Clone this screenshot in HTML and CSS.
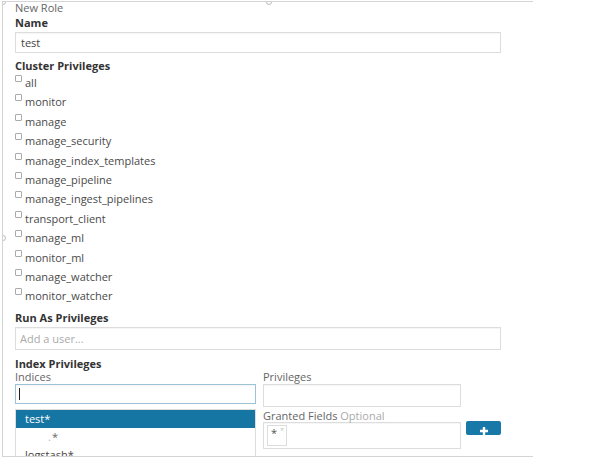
FILE: index.html
```html
<!DOCTYPE html>
<html>
<head>
<meta charset="utf-8">
<link rel="stylesheet" href="styles.css">
</head>
<body>
<div class="frame">
  <span class="handle h-tl"></span>
  <span class="handle h-tm"></span>
  <span class="handle h-ml"></span>
  <div class="title">New Role</div>
  <div class="heading name-h">Name</div>
  <div class="input name-input">test</div>
  <div class="heading sec">Cluster Privileges</div>
  <div class="checks">
    <div class="check"><span class="box"></span><span class="lbl">all</span></div>
    <div class="check"><span class="box"></span><span class="lbl">monitor</span></div>
    <div class="check"><span class="box"></span><span class="lbl">manage</span></div>
    <div class="check"><span class="box"></span><span class="lbl">manage_security</span></div>
    <div class="check"><span class="box"></span><span class="lbl">manage_index_templates</span></div>
    <div class="check"><span class="box"></span><span class="lbl">manage_pipeline</span></div>
    <div class="check"><span class="box"></span><span class="lbl">manage_ingest_pipelines</span></div>
    <div class="check"><span class="box"></span><span class="lbl">transport_client</span></div>
    <div class="check"><span class="box"></span><span class="lbl">manage_ml</span></div>
    <div class="check"><span class="box"></span><span class="lbl">monitor_ml</span></div>
    <div class="check"><span class="box"></span><span class="lbl">manage_watcher</span></div>
    <div class="check"><span class="box"></span><span class="lbl">monitor_watcher</span></div>
  </div>
  <div class="heading sec2">Run As Privileges</div>
  <div class="input runas"><span class="placeholder">Add a user...</span></div>
  <div class="heading sec3">Index Privileges</div>
  <div class="index-row">
    <div class="col-left">
      <div class="label">Indices</div>
      <div class="input focus"><span class="caret"></span></div>
      <div class="dropdown">
        <div class="opt active">test*</div>
        <div class="opt faint"><span class="dot">.</span>*</div>
        <div class="opt">logstash*</div>
      </div>
    </div>
    <div class="col-right">
      <div class="label">Privileges</div>
      <div class="input priv"></div>
      <div class="label gf">Granted Fields <span class="opt-lbl">Optional</span></div>
      <div class="input fields"><span class="tag">*<span class="x">×</span></span></div>
    </div>
    <div class="col-btn">
      <div class="add-btn">
        <svg width="10" height="10" viewBox="0 0 10 10"><path d="M5 1v8M1 5h8" stroke="#fff" stroke-width="2.4"/></svg>
      </div>
    </div>
  </div>
</div>
</body>
</html>
```

FILE: styles.css
```css
html, body {
  margin: 0;
  padding: 0;
  background: #fff;
}
body {
  font-family: "Open Sans", "Noto Sans", sans-serif;
  font-size: 11px;
  color: #444;
}
.frame {
  position: relative;
  margin: 1px 0 0 2px;
  width: 531px;
  height: 456px;
  border-top: 1px solid #d4d4d4;
  border-left: 1px solid #d4d4d4;
  border-bottom: 1px solid #d4d4d4;
  padding-left: 12px;
  box-sizing: border-box;
  overflow: hidden;
}
.handle {
  position: absolute;
  width: 4px;
  height: 4px;
  border: 1px solid #bbb;
  border-radius: 50%;
  background: #fff;
}
.h-tl { left: -3px; top: -3px; }
.h-tm { left: 263px; top: -3px; }
.h-ml { left: -3px; top: 233px; }
.title {
  font-size: 11px;
  line-height: 12px;
  color: #666;
}
.heading {
  font-weight: bold;
  color: #333;
  line-height: 16px;
  font-size: 11px;
}
.name-h { margin-top: 1px; }
.input {
  width: 486px;
  box-sizing: border-box;
  border: 1px solid #ddd;
  background: #fff;
  box-shadow: inset 0 1px 1px rgba(0,0,0,0.04);
}
.name-input {
  height: 21px;
  line-height: 19px;
  padding-left: 5px;
  color: #444;
  margin-top: 1px;
}
.sec { margin-top: 5px; }
.checks { display: flex; flex-direction: column; }
.check {
  display: flex;
  height: 19.4px;
  align-items: flex-start;
}
.box {
  width: 5px;
  height: 5px;
  border: 1px solid #aaa;
  border-radius: 1px;
  margin-top: 1px;
  flex: none;
}
.lbl {
  margin-left: 3px;
  margin-top: 2px;
  line-height: 14px;
  color: #4a4a4a;
}
.sec2 { margin-top: 3px; }
.runas {
  height: 23px;
  line-height: 21px;
  padding-left: 4px;
  margin-top: 1px;
}
.placeholder { color: #aaa; }
.sec3 { margin-top: 7px; line-height: 13px; }
.index-row {
  display: flex;
  align-items: flex-start;
}
.label {
  line-height: 13px;
  color: #666;
}
.col-left { width: 241px; }
.col-left .input, .col-right .input { width: 100%; }
.focus {
  height: 20px;
  border-color: #9cc3d6;
  position: relative;
  margin-top: 1px;
}
.caret {
  display: block;
  margin: 3px 0 0 3px;
  width: 1px;
  height: 12px;
  background: #222;
}
.dropdown {
  margin-top: 5px;
  border: 1px solid #ddd;
  border-bottom: none;
  height: 50px;
  overflow: hidden;
}
.opt {
  height: 18px;
  line-height: 18px;
  padding-left: 9px;
  color: #444;
}
.opt.active {
  background: #1575a3;
  color: #fff;
}
.opt.faint {
  padding-left: 32px;
  color: #666;
}
.dot { color: #bbb; margin-right: 1px; }
.col-right { width: 198px; margin-left: 7px; }
.priv { height: 23px; margin-top: 1px; }
.gf { margin-top: 2px; }
.opt-lbl { color: #aaa; }
.fields {
  height: 27px;
  margin-top: 0;
  padding: 2px 3px;
}
.tag {
  display: inline-flex;
  align-items: flex-start;
  width: 20px;
  height: 21px;
  box-sizing: border-box;
  border: 1px solid #ddd;
  padding-left: 3px;
  line-height: 14px;
  color: #555;
}
.x {
  font-size: 7px;
  line-height: 8px;
  color: #bbb;
  margin-left: 3px;
}
.col-btn { margin-left: 5px; padding-top: 51px; }
.add-btn {
  width: 35px;
  height: 14px;
  background: #1879a8;
  border-radius: 2px;
  display: flex;
  align-items: flex-end;
  justify-content: center;
}
.add-btn svg { display: block; margin-bottom: -1px; }
```
